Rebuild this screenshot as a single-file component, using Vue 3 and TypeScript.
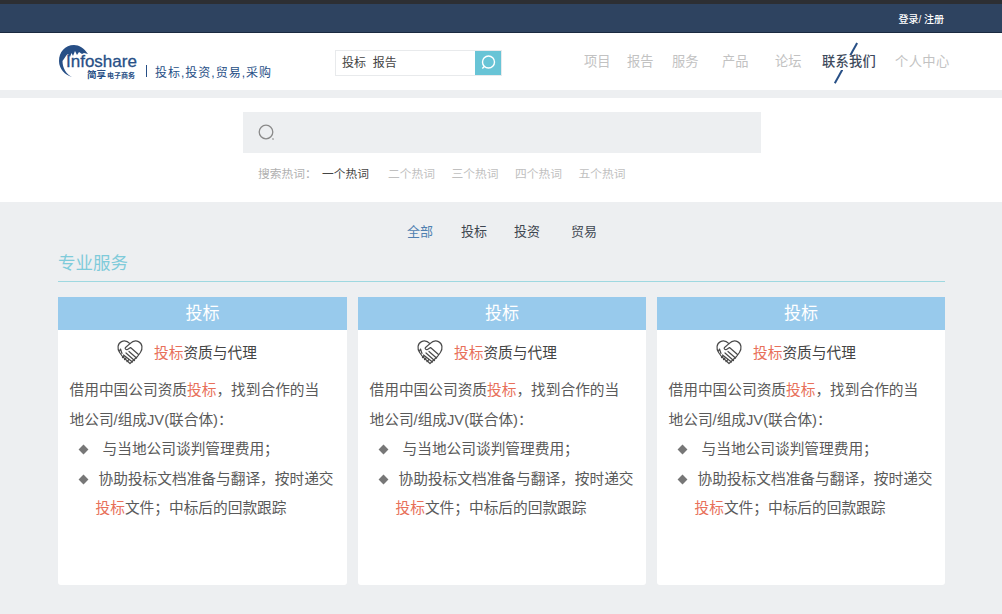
<script setup lang="ts">
const hotWords = ['二个热词', '三个热词', '四个热词', '五个热词']
const tabs = ['全部', '投标', '投资', '贸易']
const cards = [1, 2, 3]
</script>

<template>
  <div class="page">
    <div class="topbar">
      <span class="login">登录/ 注册</span>
    </div>
    <header class="header">
      <div class="logo">
        <svg class="logo-mark" viewBox="0 0 30 32" width="30" height="32">
          <path d="M29 9C25 3 20 0 15 0 6 0 0 7 0 16c0 8 6 14 13 16C7 29 3.500 23 3.500 16c2.500-3 3.500-6 5.500-7l2 3 1.500-4 1.500 3 2-5 2 4 2-3 3 2 2-1Z" fill="#274f86" />
        </svg>
        <span class="logo-en">Infoshare</span>
        <span class="logo-cn">简享<small>电子商务</small></span>
      </div>
      <span class="slogan-bar"></span>
      <span class="slogan">投标,投资,贸易,采购</span>
      <div class="head-search">
        <span class="head-input">投标&nbsp;&nbsp;报告</span>
        <span class="head-btn">
          <svg viewBox="0 0 26 25" width="26" height="25">
            <circle cx="13.500" cy="12" r="6" fill="none" stroke="#fff" stroke-width="1.400" />
            <path d="M9.300 16.500 7.300 18.500" stroke="#fff" stroke-width="1.400" />
          </svg>
        </span>
      </div>
      <nav class="nav">
        <a class="n1">项目</a>
        <a class="n2">报告</a>
        <a class="n3">服务</a>
        <a class="n4">产品</a>
        <a class="n5">论坛</a>
        <a class="n6 active">联系我们<i class="slash"></i></a>
        <a class="n7">个人中心</a>
      </nav>
    </header>
    <div class="strip"></div>
    <section class="search">
      <div class="search-box">
        <svg viewBox="0 0 20 20" width="20" height="20">
          <circle cx="9" cy="9" r="6.800" fill="none" stroke="#8a8a8a" stroke-width="1.300" />
          <path d="M15.500 15.500 16.500 16.500" stroke="#8a8a8a" stroke-width="1.200" />
        </svg>
      </div>
      <div class="hot">
        <span class="hot-label">搜索热词：</span>
        <span class="hot-first">一个热词</span>
        <span v-for="w in hotWords" :key="w" class="hot-item">{{ w }}</span>
      </div>
    </section>
    <main class="main">
      <div class="tabs">
        <span v-for="(t, i) in tabs" :key="t" class="tab" :class="'t' + i">{{ t }}</span>
      </div>
      <h2 class="title">专业服务</h2>
      <div class="cards">
        <article v-for="c in cards" :key="c" class="card">
          <div class="card-head">投标</div>
          <div class="card-sub">
            <svg viewBox="0 0 28 28" width="28" height="28" fill="none" stroke="#4a4a4a" stroke-width="1.200" stroke-linejoin="round" stroke-linecap="round">
              <path d="M6.500 19.500 3.600 15.500C1 12 1.500 6.500 5.500 4.600c3-1.400 6-.5 8.500 2 2.500-2.500 5.500-3.400 8.500-2 4 1.900 4.500 7.400 1.900 10.900L21.500 19.500 14 26.500Z" />
              <path d="M14 6.600 9.500 10.500c-1 1 .5 2.800 2 2l3-2 8 7" />
              <path d="M6 16.500 4.500 12 3.500 14" />
              <path d="m7.500 18 9 7M10 16l8.500 7.500M13 14.500l7.500 6.500M8 19l-1.500 1.500M10 21l-1.500 1.500M12.500 23l-1.500 1.500" />
            </svg>
            <span class="sub-text"><em>投标</em>资质与代理</span>
          </div>
          <div class="card-body">
            <p>借用中国公司资质<em>投标</em>，找到合作的当地公司/组成JV(联合体)：</p>
            <ul>
              <li class="first">与当地公司谈判管理费用；</li>
              <li>协助投标文档准备与翻译，按时递交<em>投标</em>文件；中标后的回款跟踪</li>
            </ul>
          </div>
        </article>
      </div>
    </main>
  </div>
</template>

<style>
html, body { margin: 0; background: #edeff1; }
</style>

<style scoped>
.page {
  width: 1002px;
  height: 614px;
  overflow: hidden;
  font-family: "Liberation Sans", "Noto Sans CJK SC", sans-serif;
  background: #edeff1;
  color: #555;
}
.topbar {
  height: 33px;
  box-sizing: border-box;
  background: #2e4360;
  border-top: 4px solid #2d2f33;
  border-bottom: 1px solid #1b2a40;
  display: flex;
  align-items: center;
  justify-content: flex-end;
  padding-right: 58px;
}
.login { color: #fff; font-size: 10px; font-weight: 500; }
.header {
  height: 57px;
  background: #fff;
  display: flex;
  align-items: center;
  position: relative;
}
.logo { position: relative; width: 78px; height: 36px; margin-left: 59px; flex: none; }
.logo-mark { position: absolute; left: 0; top: 1px; }
.logo-en {
  position: absolute;
  left: 7px;
  top: 7px;
  font-size: 17px;
  line-height: 22px;
  color: #274f86;
  -webkit-text-stroke: 0.3px #274f86;
}
.logo-cn {
  position: absolute;
  left: 28px;
  top: 25px;
  font-size: 9.500px;
  line-height: 11px;
  font-weight: 700;
  color: #274f86;
  white-space: nowrap;
}
.logo-cn small { font-size: 7px; margin-left: 1px; }
.slogan-bar { width: 1px; height: 12px; background: #274f86; margin: 19px 0 0 9px; flex: none; }
.slogan { margin: 19px 0 0 8px; font-size: 12px; color: #274f86; white-space: nowrap; width: 119px; letter-spacing: 1px; flex: none; }
.head-search {
  margin: 2px 0 0 61px;
  width: 167px;
  height: 26px;
  box-sizing: border-box;
  border: 1px solid #e8eaec;
  display: flex;
  background: #fff;
}
.head-input { flex: 1; font-size: 12px; line-height: 24px; padding-left: 6px; color: #444; }
.head-btn { width: 26px; height: 24px; background: #68c4d6; display: flex; align-items: center; justify-content: center; }
.nav { position: absolute; inset: 0; font-size: 13.250px; color: #c2c2c2; pointer-events: none; }
.nav a { white-space: nowrap; position: absolute; top: 20.500px; line-height: 16px; }
.n1 { left: 584px; }
.n2 { left: 627px; }
.n3 { left: 672px; }
.n4 { left: 722px; }
.n5 { left: 775px; }
.n6 { left: 822px; letter-spacing: 0.250px; }
.n7 { left: 895px; letter-spacing: 0.400px; }
.nav .active { color: #3d4a5c; font-weight: 500; }
.slash {
  position: absolute;
  left: 23.250px;
  top: -14px;
  width: 1.500px;
  height: 46px;
  background: linear-gradient(#274f86 0 14px, transparent 14px 31px, #274f86 31px);
  transform: rotate(29deg);
}
.strip { height: 8px; background: #edeff1; }
.search {
  height: 104px;
  background: #fff;
  box-sizing: border-box;
  padding: 14px 0 0 243px;
}
.search-box {
  width: 518px;
  height: 41px;
  background: #edeff1;
  display: flex;
  align-items: center;
  padding-left: 14px;
  box-sizing: border-box;
}
.hot { margin-top: 13px; display: flex; font-size: 11.750px; line-height: 16px; padding-left: 15px; color: #c0c0c0; white-space: nowrap; }
.hot-label { color: #b0b0b0; width: 64px; }
.hot-first { color: #444; width: 66px; }
.hot-item { width: 63.500px; }
.main { padding: 0 57px 0 58px; }
.tabs { display: flex; padding: 22px 0 0 349px; font-size: 13px; line-height: 16px; color: #3d4650; }
.tab { flex: none; }
.t0 { color: #4f7fb0; margin-right: 28px; }
.t1 { margin-right: 27px; }
.t2 { margin-right: 31px; }
.title {
  margin: 13px 0 0;
  height: 28px;
  line-height: 20px;
  font-size: 17.500px;
  font-weight: 400;
  color: #7fcbda;
  border-bottom: 1px solid #9ed8e0;
}
.cards { display: grid; grid-template-columns: 289px 288px 288px; gap: 11px; margin-top: 15px; }
.card { height: 288px; background: #fff; border-radius: 0 0 3px 3px; }
.card-head { height: 33px; line-height: 33px; background: #98caec; color: #fff; font-size: 17px; text-align: center; }
.card-sub { height: 42px; display: flex; align-items: center; padding-left: 58px; }
.sub-text { margin-left: 10px; font-size: 14.700px; color: #444; }
em { font-style: normal; color: #e8705a; }
.card-body { padding: 4px 11px 0 11.500px; font-size: 14.700px; line-height: 29.500px; color: #5a5a5a; }
.card-body p { margin: 0; padding-right: 5px; }
.card-body ul { margin: 0; padding: 0; list-style: none; }
.card-body li { position: relative; padding-left: 26px; text-indent: 3px; }
.card-body li.first { padding-left: 30px; }
.card-body li::before {
  content: "";
  position: absolute;
  left: 10px;
  top: 11px;
  width: 7px;
  height: 7px;
  background: #777;
  transform: rotate(45deg);
}
</style>
